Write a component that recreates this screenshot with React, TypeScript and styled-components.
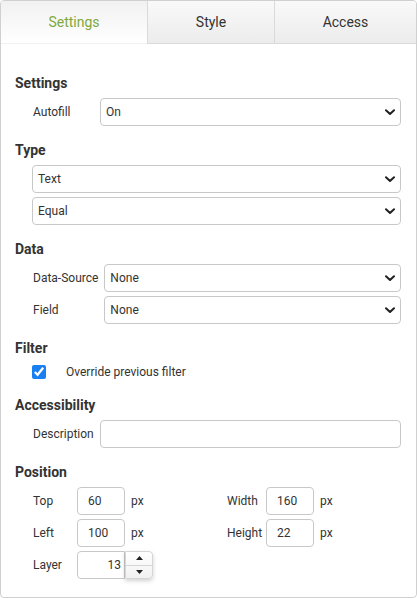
import React from 'react';
import styled, { createGlobalStyle } from 'styled-components';

const GlobalStyle = createGlobalStyle`
  html, body {
    margin: 0;
    padding: 0;
    background: #ffffff;
  }
  body {
    font-family: Roboto, "Liberation Sans", Arial, sans-serif;
    color: #333333;
  }
  * {
    box-sizing: border-box;
  }
`;

const Panel = styled.div`
  width: 417px;
  height: 598px;
  border: 1px solid #d0d0d0;
  border-radius: 4px;
  overflow: hidden;
  background: #ffffff;
`;

const TabBar = styled.div`
  display: grid;
  grid-template-columns: 146px 127px 1fr;
  height: 43px;
`;

const Tab = styled.div<{ $active?: boolean; $first?: boolean }>`
  display: flex;
  align-items: center;
  justify-content: center;
  font-size: 14px;
  color: ${p => (p.$active ? '#80a83c' : '#333333')};
  background: ${p =>
    p.$active
      ? 'linear-gradient(#f1f1f1, #ffffff)'
      : 'linear-gradient(#f9f9f9, #ececec)'};
  border-left: ${p => (p.$first ? 'none' : '1px solid #dadada')};
  border-bottom: ${p => (p.$active ? '1px solid transparent' : '1px solid #dadada')};
`;

const Body = styled.div`
  padding: 29px 15px 0 14px;
`;

const Section = styled.section`
  & + & {
    margin-top: 14px;
  }
`;

const Heading = styled.h3`
  margin: 0 0 5px;
  font-size: 14px;
  line-height: 20px;
  font-weight: 700;
  color: #333333;
`;

const Rows = styled.div`
  display: grid;
  grid-template-columns: minmax(62px, auto) 1fr;
  column-gap: 6px;
  row-gap: 4px;
  margin-left: 17px;
  align-items: center;
`;

const Stack = styled.div`
  display: flex;
  flex-direction: column;
  gap: 4px;
  margin-left: 17px;
`;

const Label = styled.label`
  font-size: 12px;
  color: #333333;
  padding-left: 1px;
  white-space: nowrap;
`;

const SelectBox = styled.div`
  display: flex;
  align-items: center;
  justify-content: space-between;
  height: 28px;
  padding: 0 5px 0 5px;
  border: 1px solid #c8c8c8;
  border-radius: 4px;
  font-size: 12px;
  color: #333333;
  background: #ffffff;
`;

const TextBox = styled.div`
  height: 28px;
  border: 1px solid #c8c8c8;
  border-radius: 4px;
  background: #ffffff;
`;

const CheckRow = styled.label`
  display: flex;
  align-items: center;
  gap: 20px;
  height: 18px;
  margin-left: 17px;
  font-size: 12px;
  color: #333333;
`;

const Check = styled.input`
  width: 14px;
  height: 14px;
  margin: 0;
  accent-color: #1a7ff0;
`;

const PosGrid = styled.div`
  display: grid;
  grid-template-columns: 194px 1fr;
  row-gap: 4px;
  margin-left: 17px;
`;

const Field = styled.div`
  display: flex;
  align-items: center;
  height: 28px;
`;

const PosLabel = styled.span<{ $w: number }>`
  width: ${p => p.$w}px;
  padding-left: 1px;
  font-size: 12px;
  color: #333333;
`;

const NumBox = styled.div<{ $right?: boolean }>`
  width: 48px;
  height: 28px;
  display: flex;
  align-items: center;
  justify-content: ${p => (p.$right ? 'flex-end' : 'flex-start')};
  padding: ${p => (p.$right ? '0 3px 0 0' : '0 0 0 10px')};
  border: 1px solid #c8c8c8;
  border-radius: ${p => (p.$right ? '4px 0 0 4px' : '4px')};
  font-size: 12px;
  color: #333333;
  background: #ffffff;
`;

const Unit = styled.span`
  margin-left: 6px;
  font-size: 12px;
  color: #333333;
`;

const Spinner = styled.div`
  width: 28px;
  height: 28px;
  display: flex;
  flex-direction: column;
  border: 1px solid #d6d6d6;
  border-radius: 0 4px 4px 0;
  background: linear-gradient(#ffffff, #f1f1f1);
  box-shadow: 0 2px 4px rgba(0, 0, 0, 0.18);
`;

const SpinHalf = styled.div<{ $top?: boolean }>`
  flex: 1;
  display: flex;
  align-items: center;
  justify-content: center;
  border-bottom: ${p => (p.$top ? '1px solid #d6d6d6' : 'none')};
`;

const Chevron = () => (
  <svg width="10" height="7" viewBox="0 0 10 7">
    <path d="M1 1.2 L5 5 L9 1.2" fill="none" stroke="#222" strokeWidth="2" strokeLinecap="round" strokeLinejoin="round" />
  </svg>
);

const Tri = ({ up }: { up?: boolean }) => (
  <svg width="7" height="4" viewBox="0 0 7 4">
    <path d={up ? 'M0 4 L3.5 0 L7 4 Z' : 'M0 0 L3.5 4 L7 0 Z'} fill="#222" />
  </svg>
);

const Select = ({ value }: { value: string }) => (
  <SelectBox>
    <span>{value}</span>
    <Chevron />
  </SelectBox>
);

export default function App() {
  return (
    <>
      <GlobalStyle />
      <Panel>
        <TabBar>
          <Tab $active $first>Settings</Tab>
          <Tab>Style</Tab>
          <Tab>Access</Tab>
        </TabBar>
        <Body>
          <Section>
            <Heading>Settings</Heading>
            <Rows>
              <Label>Autofill</Label>
              <Select value="On" />
            </Rows>
          </Section>

          <Section>
            <Heading>Type</Heading>
            <Stack>
              <Select value="Text" />
              <Select value="Equal" />
            </Stack>
          </Section>

          <Section>
            <Heading>Data</Heading>
            <Rows>
              <Label>Data-Source</Label>
              <Select value="None" />
              <Label>Field</Label>
              <Select value="None" />
            </Rows>
          </Section>

          <Section>
            <Heading>Filter</Heading>
            <CheckRow>
              <Check type="checkbox" checked readOnly />
              Override previous filter
            </CheckRow>
          </Section>

          <Section>
            <Heading>Accessibility</Heading>
            <Rows>
              <Label>Description</Label>
              <TextBox />
            </Rows>
          </Section>

          <Section>
            <Heading>Position</Heading>
            <PosGrid>
              <Field>
                <PosLabel $w={45}>Top</PosLabel>
                <NumBox>60</NumBox>
                <Unit>px</Unit>
              </Field>
              <Field>
                <PosLabel $w={40}>Width</PosLabel>
                <NumBox>160</NumBox>
                <Unit>px</Unit>
              </Field>
              <Field>
                <PosLabel $w={45}>Left</PosLabel>
                <NumBox>100</NumBox>
                <Unit>px</Unit>
              </Field>
              <Field>
                <PosLabel $w={40}>Height</PosLabel>
                <NumBox>22</NumBox>
                <Unit>px</Unit>
              </Field>
              <Field>
                <PosLabel $w={45}>Layer</PosLabel>
                <NumBox $right>13</NumBox>
                <Spinner>
                  <SpinHalf $top>
                    <Tri up />
                  </SpinHalf>
                  <SpinHalf>
                    <Tri />
                  </SpinHalf>
                </Spinner>
              </Field>
            </PosGrid>
          </Section>
        </Body>
      </Panel>
    </>
  );
}
